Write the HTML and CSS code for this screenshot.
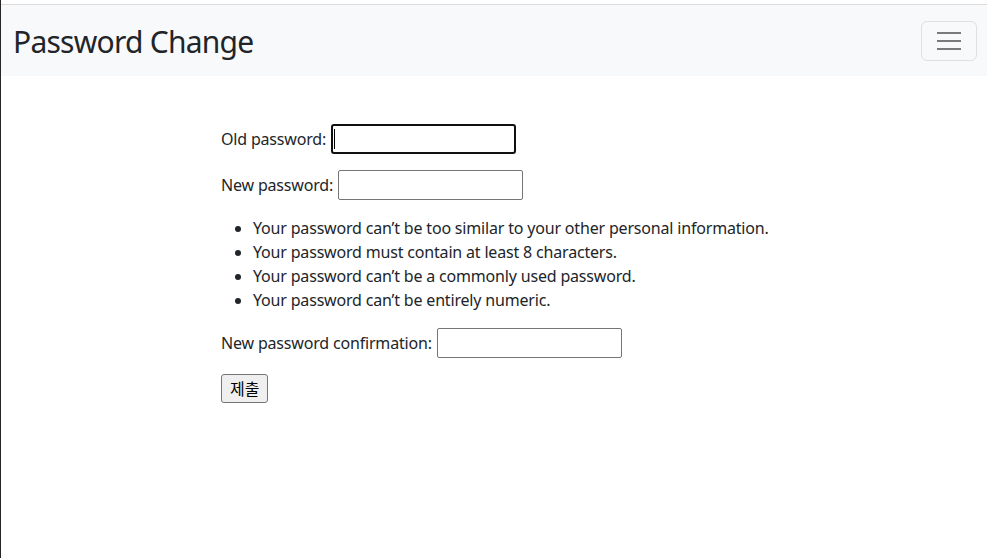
FILE: index.html
```html
<!DOCTYPE html>
<html lang="ko">
<head>
<meta charset="utf-8">
<title>Password Change</title>
<link rel="stylesheet" href="styles.css">
</head>
<body>
<nav class="navbar">
  <span class="brand">Password Change</span>
  <button class="toggler" type="button" aria-label="Toggle navigation">
    <svg width="24" height="20" viewBox="0 0 24 20" aria-hidden="true">
      <path d="M0 2h24M0 10h24M0 18h24" stroke="#7a7a7a" stroke-width="2.2" fill="none"/>
    </svg>
  </button>
</nav>
<main class="content">
  <form class="form">
    <p class="row"><label for="old">Old password:</label><span class="caret-wrap"><input id="old" class="field focused" type="password"></span></p>
    <p class="row"><label for="new1">New password:</label><input id="new1" class="field" type="password"></p>
    <ul class="help">
      <li>Your password can’t be too similar to your other personal information.</li>
      <li>Your password must contain at least 8 characters.</li>
      <li>Your password can’t be a commonly used password.</li>
      <li>Your password can’t be entirely numeric.</li>
    </ul>
    <p class="row"><label for="new2">New password confirmation:</label><input id="new2" class="field" type="password"></p>
    <button class="submit" type="button">제출</button>
  </form>
</main>
</body>
</html>
```
FILE: styles.css
```css
html {
  min-height: 100%;
  border-left: 1px solid #262626;
  background: #fff;
}
body {
  margin: 0;
  padding-top: 4px;
  font-family: "Noto Sans", "Noto Sans CJK KR", sans-serif;
  font-size: 16px;
  line-height: 1.5;
  letter-spacing: -0.18px;
  color: #212529;
}
.navbar {
  display: flex;
  align-items: center;
  justify-content: space-between;
  height: 71px;
  padding: 0 10px 0 12px;
  background: #f8f9fa;
  border-top: 1px solid #dcdcdc;
}
.brand {
  font-size: 30px;
  line-height: 1;
  letter-spacing: -0.75px;
  padding-top: 2px;
  color: #212529;
}
.toggler {
  width: 56px;
  height: 40px;
  display: flex;
  align-items: center;
  justify-content: center;
  padding: 0;
  background: transparent;
  border: 1px solid #dfe0e1;
  border-radius: 6px;
}
.content {
  padding: 48px 0 0 220px;
}
.row {
  display: flex;
  align-items: center;
  gap: 5px;
  margin: 0 0 16px;
}
.field {
  box-sizing: border-box;
  width: 185px;
  height: 30px;
  padding: 1px 2px;
  font: inherit;
  border: 1px solid #767676;
  border-radius: 2px;
  background: #fff;
}
.field.focused {
  border: 2px solid #101010;
  border-radius: 3px;
}
.caret-wrap {
  position: relative;
  display: flex;
}
.caret-wrap::after {
  content: "";
  position: absolute;
  left: 3px;
  top: 5px;
  width: 1px;
  height: 20px;
  background: #000;
}
.help {
  margin: 0 0 16px;
  padding-left: 32px;
}
.submit {
  height: 29px;
  padding: 0 8px;
  font: inherit;
  letter-spacing: 0;
  line-height: 1;
  color: #000;
  background: #efefef;
  border: 1px solid #767676;
  border-radius: 3px;
}
```
